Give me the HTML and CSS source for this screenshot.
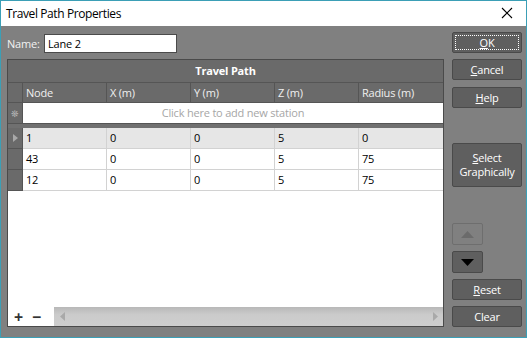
FILE: index.html
```html
<!DOCTYPE html>
<html lang="en">
<head>
    <meta charset="UTF-8">
    <title>Travel Path Properties</title>
    <link rel="stylesheet" href="styles.css">
</head>
<body>
    <div class="window">
        <div class="titlebar">
            <span class="title">Travel Path Properties</span>
            <svg class="close" width="12" height="12" viewBox="0 0 12 12">
                <path d="M1 1 L11 11 M11 1 L1 11" stroke="#000" stroke-width="1.1" fill="none"/>
            </svg>
        </div>
        <div class="content">
            <div class="left">
                <div class="name-row">
                    <label class="name-label">Name:</label>
                    <div class="name-input">Lane 2</div>
                </div>
                <div class="grid">
                    <div class="band">Travel Path</div>
                    <div class="row head">
                        <div class="rh"></div>
                        <div class="cell">Node</div>
                        <div class="cell">X (m)</div>
                        <div class="cell">Y (m)</div>
                        <div class="cell">Z (m)</div>
                        <div class="cell">Radius (m)</div>
                    </div>
                    <div class="row new">
                        <div class="rh"><span class="star">&#10058;</span></div>
                        <div class="new-text">Click here to add new station</div>
                    </div>
                    <div class="sep"></div>
                    <div class="row data current">
                        <div class="rh">
                            <svg width="5" height="8" viewBox="0 0 5 8"><path d="M0 0 L5 4 L0 8 Z" fill="#a8a8a8"/></svg>
                        </div>
                        <div class="cell">1</div>
                        <div class="cell">0</div>
                        <div class="cell">0</div>
                        <div class="cell">5</div>
                        <div class="cell">0</div>
                    </div>
                    <div class="row data">
                        <div class="rh"></div>
                        <div class="cell">43</div>
                        <div class="cell">0</div>
                        <div class="cell">0</div>
                        <div class="cell">5</div>
                        <div class="cell">75</div>
                    </div>
                    <div class="row data">
                        <div class="rh"></div>
                        <div class="cell">12</div>
                        <div class="cell">0</div>
                        <div class="cell">0</div>
                        <div class="cell">5</div>
                        <div class="cell">75</div>
                    </div>
                    <div class="empty"></div>
                    <div class="footer">
                        <div class="tools">
                            <span class="tool">+</span>
                            <span class="tool">&minus;</span>
                        </div>
                        <div class="hscroll">
                            <svg width="5" height="9" viewBox="0 0 5 9"><path d="M5 0 L0 4.5 L5 9 Z" fill="#a9a9a9"/></svg>
                            <svg width="5" height="9" viewBox="0 0 5 9"><path d="M0 0 L5 4.5 L0 9 Z" fill="#a9a9a9"/></svg>
                        </div>
                    </div>
                </div>
            </div>
            <div class="right">
                <button class="btn ok"><span class="focus"><u>O</u>K</span></button>
                <button class="btn cancel"><u>C</u>ancel</button>
                <button class="btn help"><u>H</u>elp</button>
                <button class="btn select"><u>S</u>elect<br>Graphically</button>
                <div class="lower">
                    <button class="btn arrow disabled">
                        <svg width="13" height="7" viewBox="0 0 13 7"><path d="M0 7 L6.5 0 L13 7 Z" fill="#6b6b6b"/></svg>
                    </button>
                    <button class="btn arrow">
                        <svg width="13" height="7" viewBox="0 0 13 7"><path d="M0 0 L6.5 7 L13 0 Z" fill="#000"/></svg>
                    </button>
                    <button class="btn reset"><u>R</u>eset</button>
                    <button class="btn clear">Clear</button>
                </div>
            </div>
        </div>
    </div>
</body>
</html>
```

FILE: styles.css
```css
body {
    margin: 0;
    font-family: 'Open Sans', 'Noto Sans', sans-serif;
    font-size: 11px;
    letter-spacing: -0.2px;
}

.window {
    width: 527px;
    height: 338px;
    box-sizing: border-box;
    border: 1px solid #3b9fb6;
    background: #808080;
    display: flex;
    flex-direction: column;
}

.titlebar {
    height: 25px;
    background: #ffffff;
    display: flex;
    align-items: center;
    justify-content: space-between;
    padding: 0 13px 0 5px;
}

.title {
    font-size: 12px;
    letter-spacing: -0.4px;
    color: #000;
    margin-top: -1px;
}

.close {
    margin-top: -1px;
}

.content {
    flex: 1;
    display: flex;
    padding: 6px 4px 10px 6px;
}

.left {
    width: 437px;
    display: flex;
    flex-direction: column;
}

.name-row {
    display: flex;
    align-items: center;
    height: 20px;
    margin-top: 1px;
    margin-bottom: 6px;
}

.name-label {
    color: #f2f2f2;
    width: 37px;
}

.name-input {
    width: 128px;
    height: 17px;
    line-height: 17px;
    background: #fff;
    border: 1px solid #4b4b4b;
    padding-left: 3px;
    color: #000;
}

.grid {
    flex: 1;
    border: 1px solid #4a4a4a;
    background: #fff;
    display: flex;
    flex-direction: column;
}

.band {
    height: 22px;
    line-height: 22px;
    background: #6a6a6a;
    color: #fff;
    font-weight: bold;
    text-align: center;
    border-bottom: 1px solid #555;
}

.row {
    display: grid;
    grid-template-columns: 15px repeat(5, 84px);
    height: 21px;
}

.row .rh {
    background: #6a6a6a;
    border-right: 1px solid #555;
    border-bottom: 1px solid #555;
    display: flex;
    align-items: center;
    justify-content: center;
}

.cell {
    padding-left: 3px;
    line-height: 20px;
    border-right: 1px solid #d2d2d2;
    border-bottom: 1px solid #d2d2d2;
    color: #000;
}

.cell:last-child {
    border-right: none;
}

.head {
    height: 20px;
}

.head .cell {
    background: #6a6a6a;
    color: #f0f0f0;
    line-height: 19px;
    border-color: #555;
}

.new .new-text {
    grid-column: span 5;
    text-align: center;
    line-height: 20px;
    color: #a6a6a6;
    border-bottom: 1px solid #555;
}

.star {
    color: #c8c8c8;
    font-size: 9px;
}

.sep {
    height: 4px;
    background: #707070;
}

.current .cell {
    background: #e6e6e6;
}

.empty {
    flex: 1;
}

.footer {
    height: 19px;
    display: flex;
}

.tools {
    width: 40px;
    display: flex;
    align-items: center;
    gap: 9px;
    padding-left: 6px;
}

.tool {
    font-size: 16px;
    font-weight: bold;
    color: #333;
    line-height: 16px;
}

.hscroll {
    flex: 1;
    background: linear-gradient(#b8b8b8, #cbcbcb 40%, #cecece);
    display: flex;
    align-items: center;
    justify-content: space-between;
    padding: 0 5px 0 6px;
}

.right {
    margin-left: 8px;
    width: 70px;
    display: flex;
    flex-direction: column;
}

.btn {
    font-family: inherit;
    font-size: 11px;
    letter-spacing: -0.2px;
    color: #fff;
    background: #5f5f5f;
    border: 1px solid #4a4a4a;
    border-radius: 2px;
    height: 21px;
    padding: 0;
    margin: 0;
}

.ok {
    padding: 2px;
}

.focus {
    display: block;
    height: 100%;
    box-sizing: border-box;
    border: 1px dotted #fff;
    line-height: 14px;
}

.cancel {
    margin-top: 6px;
}

.help {
    margin-top: 7px;
}

.select {
    height: 44px;
    margin-top: 35px;
    line-height: 14px;
}

.lower {
    margin-top: auto;
    display: flex;
    flex-direction: column;
    gap: 6px;
}

.arrow {
    width: 31px;
    height: 22px;
    display: flex;
    align-items: center;
    justify-content: center;
}

.arrow.disabled {
    background: #808080;
    border-color: #6e6e6e;
}
```
